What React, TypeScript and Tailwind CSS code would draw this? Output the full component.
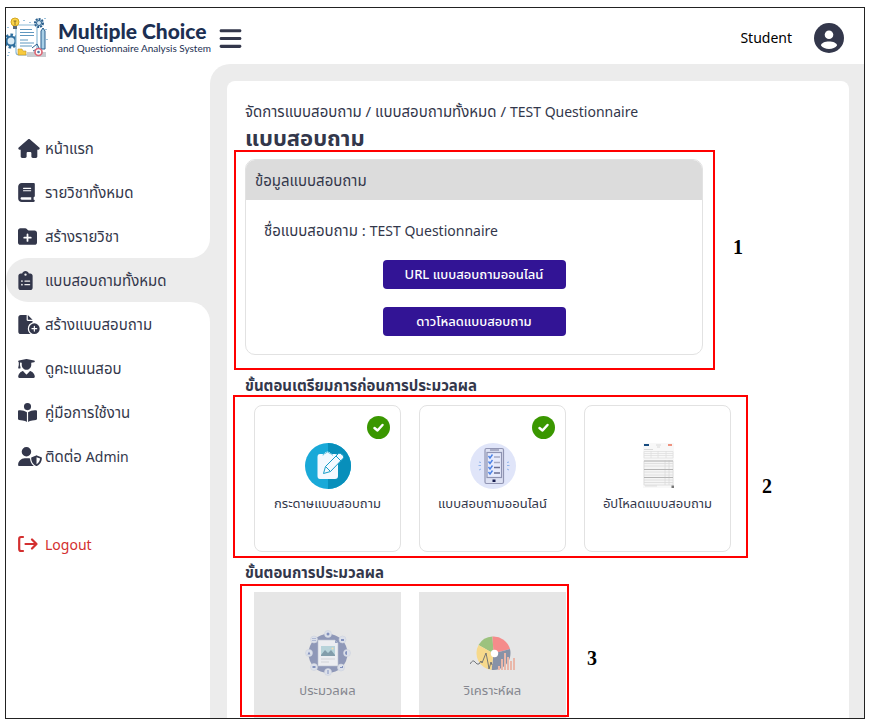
import type { ReactNode } from "react";
import {
  FaBars,
  FaBook,
  FaBookOpenReader,
  FaClipboardList,
  FaFileCirclePlus,
  FaFolderPlus,
  FaHouse,
  FaUserGraduate,
  FaUserShield,
} from "react-icons/fa6";

type NavEntry = { thai?: string; latin?: string; icon: ReactNode };

const navAbove: NavEntry[] = [
  { thai: "หน้าแรก", icon: <FaHouse className="h-[19px] w-[22px]" /> },
  { thai: "รายวิชาทั้งหมด", icon: <FaBook className="h-[19px] w-[17px]" /> },
  { thai: "สร้างรายวิชา", icon: <FaFolderPlus className="h-[19px] w-[19px]" /> },
];

const navBelow: NavEntry[] = [
  { thai: "สร้างแบบสอบถาม", icon: <FaFileCirclePlus className="h-[19px] w-[22px]" /> },
  { thai: "ดูคะแนนสอบ", icon: <FaUserGraduate className="h-[19px] w-[17px]" /> },
  { thai: "คู่มือการใช้งาน", icon: <FaBookOpenReader className="h-[19px] w-[19px]" /> },
  { thai: "ติดต่อ ", latin: "Admin", icon: <FaUserShield className="h-[19px] w-[24px]" /> },
];

function NavLink({ thai, latin, icon }: NavEntry) {
  return (
    <a href="#" className="flex h-11 items-center pl-3 text-[15px] whitespace-nowrap">
      <span className="w-[27px] shrink-0">{icon}</span>
      <span>
        {thai}
        {latin && <span className="text-sm">{latin}</span>}
      </span>
    </a>
  );
}

function LogoutIcon() {
  return (
    <svg
      viewBox="0 0 20 19"
      className="h-[19px] w-5"
      fill="none"
      stroke="currentColor"
      strokeWidth="2.2"
      strokeLinecap="round"
      strokeLinejoin="round"
      aria-hidden="true"
    >
      <path d="M5 2H3Q1.200 2 1.200 4V14Q1.200 16 3 16H5" />
      <path d="M7.500 9H18.500M14 4.500L18.500 9L14 13.500" />
    </svg>
  );
}

function LogoArt() {
  return (
    <svg viewBox="0 0 42 42" className="mt-1 h-[42px] w-[42px] shrink-0" aria-hidden="true">
      <g fill="#9cc3dd">
        <rect x="17" y="3" width="2" height="1" />
        <rect x="23" y="5" width="2" height="1" />
        <rect x="1" y="10" width="2" height="1" />
        <rect x="38" y="1" width="2" height="1" />
        <rect x="39" y="12" width="2" height="1" />
        <rect x="40" y="22" width="2" height="1" />
        <rect x="2" y="35" width="2" height="1" />
        <rect x="1" y="38" width="2" height="1" />
        <rect x="37" y="38" width="3" height="1" />
      </g>
      <circle cx="5" cy="24" r="6" fill="none" stroke="#2f6f9e" strokeWidth="3" strokeDasharray="2.5 2" />
      <circle cx="5" cy="24" r="4.500" fill="#d8eaf5" stroke="#2f6f9e" strokeWidth="2" />
      <path d="M10 8H31V38H13Q10 38 10 35Z" fill="#fff" stroke="#8bb9d6" strokeWidth="1.2" />
      <path d="M14 12.500H26M14 15.500H28M14 18.500H28M14 23H22M14 26H28M14 29H26" stroke="#5f97bf" strokeWidth="1.2" />
      <circle cx="9" cy="5" r="4" fill="#fbd54a" stroke="#d3a622" />
      <path d="M9 4V8M7.500 4H10.500" stroke="#775c1e" strokeWidth=".8" />
      <path d="M7 9H11V12H7Z" fill="#5b6b7c" />
      <circle cx="33" cy="6" r="4" fill="#d8eaf5" stroke="#2a5f8d" strokeWidth="2" strokeDasharray="2 1" />
      <circle cx="33" cy="6" r="2.500" fill="none" stroke="#2a5f8d" />
      <path d="M35 14L37 11L39 14V32H35Z" fill="#a9cfe6" stroke="#2a5f8d" />
      <path d="M26 31L31 27L33 31L27 34" fill="none" stroke="#2a5f8d" />
      <path d="M21 35H40V40H21Z" fill="#c9ccd0" />
      <path d="M12 32H16L17 34H20V38H12Z" fill="#f8ca3d" stroke="#bd9228" strokeWidth=".6" />
      <circle cx="32.500" cy="35" r="3.500" fill="#fff" stroke="#dc6877" strokeWidth="1.700" />
      <circle cx="32.500" cy="35" r="1.300" fill="#4d77a5" />
    </svg>
  );
}

function Avatar() {
  return (
    <svg viewBox="0 0 30 30" className="h-[30px] w-[30px]" aria-hidden="true">
      <circle cx="15" cy="15" r="15" fill="#33374b" />
      <circle cx="15" cy="11.700" r="4.300" fill="#fff" />
      <path d="M7 22.500C7 20 11 18.500 15 18.500S23 20 23 22.500C21.500 24.500 18.500 26 15 26S8.500 24.500 7 22.500Z" fill="#fff" />
    </svg>
  );
}

function PaperArt() {
  return (
    <svg viewBox="0 0 46 46" className="h-[46px] w-[46px]" aria-hidden="true">
      <circle cx="23" cy="23" r="23" fill="#19a9d8" />
      <path d="M23 0A23 23 0 0 1 23 46Z" fill="#088fbb" />
      <path d="M15 11H19Q20 8.500 22.500 8.500T26 11H30Q33 11 33 14V33Q33 36 30 36H15Q12.500 36 12.500 33V14Q12.500 11 15 11Z" fill="#f3f9ff" />
      <path d="M18 12.500Q18 10.500 20 10.500Q22.500 7.500 25 10.500Q27.500 10.500 27.500 12.500" fill="none" stroke="#69c3df" />
      <path d="M18.500 30.500L20.500 23.500L33.500 10.500Q35 9.500 37 11.500L38.500 13Q39 14.500 38 15.500L25.500 28.500Z" fill="#f3f9ff" stroke="#169cc8" strokeLinejoin="round" />
      <path d="M31 13L36 18M20.500 23.500L25.500 28.500" stroke="#169cc8" />
    </svg>
  );
}

function PhoneArt() {
  return (
    <svg viewBox="0 0 46 46" className="h-[46px] w-[46px]" aria-hidden="true">
      <circle cx="23" cy="23" r="23" fill="#e0e5f9" />
      <rect x="15" y="5.500" width="18.500" height="35" rx="1.500" fill="#dde1f3" stroke="#9195b3" strokeWidth="1.200" />
      <path d="M20 6H29V8H20Z" fill="#a9adc6" />
      <rect x="17" y="9.500" width="14.500" height="25" fill="#e7ebfc" stroke="#8e93b2" strokeWidth="1.200" />
      <g fill="none" stroke="#4c82e5" strokeWidth="1.400">
        <path d="M18.500 13L20 15L22.500 11.500" />
        <path d="M18.500 18.500L20 20.500L22.500 17" />
        <path d="M18.500 24L20 26L22.500 22.500" />
        <path d="M18.500 29L20 31L22.500 27.500" />
      </g>
      <path d="M24 14H30M24 19.500H30" stroke="#a7abc3" strokeWidth="1.500" />
      <path d="M24 24.500H30M24 30H30" stroke="#6b6f91" strokeWidth="1.500" />
      <rect x="22.500" y="36.500" width="3" height="2.500" fill="#171c4f" />
      <path d="M9 19L11 19.500M8.500 22.500H11M9 27L11 26M37 19.500L39 19M37 22.500H39.500M37 26L39 27" stroke="#91b4ea" />
    </svg>
  );
}

function SheetArt() {
  return (
    <svg viewBox="0 0 46 46" className="h-[46px] w-[46px]" aria-hidden="true">
      <rect x="8" y="0" width="31" height="45" fill="#f8f8f8" />
      <rect x="9" y="1" width="5" height="2" fill="#174c80" />
      <rect x="33" y="1" width="4" height="2" fill="#ef927f" />
      <path d="M21 2H26M22 4H25M9 6.500H18" stroke="#d0d0d0" strokeWidth=".8" />
      <path d="M9 8.500H38V15H9ZM9 10.500H38M9 12.500H38M16 8V15M23 8V15M31 8V15" fill="none" stroke="#e0e0e0" strokeWidth=".8" />
      <path d="M9 18H38V42H9ZM9 20.500H38M9 23H38M9 29H38M9 32H38M9 37H38M9 39.500H38M30 17V42M34 17V42" fill="#f5f5f5" stroke="#dadada" strokeWidth=".8" />
      <path d="M9 18H38M9 26.500H38M9 34.500H38" stroke="#b5b5b5" strokeWidth="1.200" />
      <path d="M10 43H22" stroke="#d5d5d5" strokeWidth=".7" />
      <rect x="36.500" y="42.500" width="2.500" height="2.500" fill="#777" />
    </svg>
  );
}

function ProcessArt() {
  return (
    <svg viewBox="0 0 46 46" className="h-[46px] w-[46px]" aria-hidden="true">
      <circle cx="23" cy="23.500" r="19.500" fill="#8f98b8" />
      <g fill="#dce0ea" stroke="#cdd1dd" strokeWidth=".6">
        <circle cx="23" cy="4" r="3.500" />
        <circle cx="37.500" cy="9.500" r="3.500" />
        <circle cx="42" cy="23" r="3.500" />
        <circle cx="36" cy="37.500" r="3.500" />
        <circle cx="23" cy="42" r="3.500" />
        <circle cx="9" cy="37" r="3.500" />
        <circle cx="4" cy="23" r="3.500" />
        <circle cx="9" cy="9.500" r="3.500" />
      </g>
      <g fill="#8291bd">
        <circle cx="23" cy="4" r="1.500" />
        <path d="M36 9H39V11H36ZM42 21A2 2 0 0 0 42 25ZM35 38H38V36H37V37H35ZM22.500 40H23.500V44H22.500ZM7.500 36H10.500V38H7.500ZM4 21.500L5.500 24.500H2.500Z" />
        <path d="M7 8.500H11V9H7ZM7 10.500H11V11H7Z" />
      </g>
      <path d="M13 10H30L33 13V36H13Z" fill="#ecedf1" stroke="#bdc2d2" strokeWidth=".6" />
      <path d="M30 10V13H33Z" fill="#9aa5c4" />
      <rect x="16" y="16" width="14" height="10" fill="#b7d3da" />
      <path d="M16 25L20 20L23 23L26 20L30 25V26H16Z" fill="#829dab" />
      <circle cx="27.500" cy="18.500" r="1" fill="#f6dfb0" />
      <path d="M16 29H30M16 32H24" stroke="#d1d3d8" />
    </svg>
  );
}

function AnalysisArt() {
  return (
    <svg viewBox="0 0 46 46" className="h-[46px] w-[46px]" aria-hidden="true">
      <path d="M23.500 23.500L8.500 15A17 17 0 0 1 22.500 6.500Z" fill="#9cc27e" />
      <path d="M23.500 23.500L22.500 6.500A17 17 0 0 1 40 19Z" fill="#f58b8b" />
      <path d="M23.500 23.500L40 19A17 17 0 0 1 21.500 40Z" fill="#8792a7" />
      <path d="M23.500 23.500L21.500 40A17 17 0 0 1 8.500 15Z" fill="#f7d98b" />
      <circle cx="24.500" cy="23.500" r="3.700" fill="#fff" />
      <g fill="#e9b7a9">
        <rect x="28" y="36" width="2" height="4" />
        <rect x="31" y="29" width="2" height="11" />
        <rect x="34" y="23" width="2" height="17" />
        <rect x="37" y="27" width="2" height="13" />
        <rect x="40" y="31" width="2" height="9" />
        <rect x="43" y="28" width="2" height="12" />
      </g>
      <path d="M0 34Q3 29 5 32T9 34L11 31L12 33L16 23L18 33L19 39L21 32L22 35" fill="none" stroke="#686b70" strokeWidth=".9" />
    </svg>
  );
}

function StepCard({ label, art, done = false }: { label: string; art: ReactNode; done?: boolean }) {
  return (
    <button
      type="button"
      className="relative flex h-[147px] w-[147px] flex-col items-center gap-0.5 rounded-lg border border-[#e2e2e2] bg-white pt-[37px] text-[13px] leading-6"
    >
      {art}
      {label}
      {done && (
        <span className="absolute top-[10px] right-[10px] size-[23px] rounded-full bg-[#3a9700]">
          <svg viewBox="0 0 23 23" fill="none" stroke="#fff" strokeWidth="2.5" strokeLinecap="round" strokeLinejoin="round" aria-hidden="true">
            <path d="M7.500 12L10.500 14.500L15.500 9" />
          </svg>
        </span>
      )}
    </button>
  );
}

function LockedCard({ label, art }: { label: string; art: ReactNode }) {
  return (
    <button
      type="button"
      disabled
      className="flex h-[147px] w-[147px] flex-col items-center gap-0.5 bg-[#e6e6e6] pt-[38px] text-[13px] leading-6 text-[#85868f]"
    >
      {art}
      {label}
    </button>
  );
}

/* Red outline laid over a section, with its number to the right. */
function Callout({ number, className, numberClass }: { number: string; className: string; numberClass: string }) {
  return (
    <div className={`pointer-events-none absolute border-2 border-[#f00] ${className}`}>
      <span
        className={`absolute left-full -translate-y-1/2 font-['Liberation_Serif',serif] text-xl leading-6 font-bold text-black ${numberClass}`}
      >
        {number}
      </span>
    </div>
  );
}

export default function App() {
  return (
    <div className="h-screen bg-white px-[5px] pt-[7px] pb-[3px] font-['Noto_Sans','Noto_Sans_Thai',sans-serif] text-[#33374b]">
      <div className="flex h-full flex-col overflow-hidden border border-[#222]">
        <header className="z-10 flex h-14 shrink-0 items-center bg-white pr-5">
          <LogoArt />
          <div className="ml-[10px] w-[150px] pt-0.5 font-['Lato',sans-serif] whitespace-nowrap text-[#1c2f52] [font-variant-ligatures:none]">
            <div className="text-[21px] leading-[22px] font-black">Multiple Choice</div>
            <div className="text-[10px] leading-3">and Questionnaire Analysis System</div>
          </div>
          <button type="button" aria-label="Menu" className="mt-1 ml-[10px] text-[25px]">
            <FaBars />
          </button>
          <div className="ml-auto flex items-center gap-[22px] pt-1 text-sm text-black">
            Student
            <Avatar />
          </div>
        </header>

        <div className="flex min-h-0 flex-1 bg-white">
          <nav className="flex w-[204px] shrink-0 flex-col bg-[#ececec]">
            <div className="rounded-br-[20px] bg-white pt-[62px]">
              {navAbove.map((item) => (
                <NavLink key={item.thai} {...item} />
              ))}
            </div>
            <div className="bg-white">
              <div className="rounded-l-[22px] bg-[#ececec]">
                <NavLink thai="แบบสอบถามทั้งหมด" icon={<FaClipboardList className="h-[19px] w-[15px]" />} />
              </div>
            </div>
            <div className="flex-1 rounded-tr-[20px] bg-white">
              {navBelow.map((item) => (
                <NavLink key={item.thai} {...item} />
              ))}
              <div className="pt-11 text-[#d32f2f]">
                <NavLink latin="Logout" icon={<LogoutIcon />} />
              </div>
            </div>
          </nav>

          <main className="flex min-w-0 flex-1 overflow-hidden rounded-tl-[20px] bg-[#ececec] pt-[17px] pr-[15px] pl-[17px]">
            <div className="min-w-0 flex-1 rounded-t-lg bg-white px-[18px] pt-[18px]">
              <div className="text-[15px] leading-6">
                จัดการแบบสอบถาม / แบบสอบถามทั้งหมด / <span className="text-sm">TEST Questionnaire</span>
              </div>
              <h1 className="text-[22px] leading-7 font-bold">แบบสอบถาม</h1>

              <section className="relative mt-2 max-w-[458px]">
                <div className="rounded-[10px] border border-[#e2e2e2]">
                  <h2 className="rounded-t-[9px] bg-[#dcdcdc] px-[9px] text-[15px] leading-10">ข้อมูลแบบสอบถาม</h2>
                  <div className="flex flex-col items-center gap-[18px] p-[18px]">
                    <p className="w-full text-[15px] leading-6">
                      ชื่อแบบสอบถาม : <span className="text-sm">TEST Questionnaire</span>
                    </p>
                    <button type="button" className="h-[29px] w-[183px] rounded bg-[#321495] text-[13px] font-medium text-white">
                      URL แบบสอบถามออนไลน์
                    </button>
                    <button type="button" className="h-[29px] w-[183px] rounded bg-[#321495] text-[13px] font-medium text-white">
                      ดาวโหลดแบบสอบถาม
                    </button>
                  </div>
                </div>
                <Callout number="1" className="-top-[9px] -right-[12px] -bottom-[15px] -left-[11px]" numberClass="top-[44%] pl-5" />
              </section>

              <h2 className="mt-[18px] text-[15px] leading-6 font-bold">ขั้นตอนเตรียมการก่อนการประมวลผล</h2>
              <section className="relative mt-2 ml-[9px] flex w-fit gap-[18px]">
                <StepCard label="กระดาษแบบสอบถาม" art={<PaperArt />} done />
                <StepCard label="แบบสอบถามออนไลน์" art={<PhoneArt />} done />
                <StepCard label="อัปโหลดแบบสอบถาม" art={<SheetArt />} />
                <Callout number="2" className="-top-[10px] -right-[17px] -bottom-[6px] -left-[21px]" numberClass="top-[56%] pl-4" />
              </section>

              <h2 className="mt-2 text-[15px] leading-6 font-bold">ขั้นตอนการประมวลผล</h2>
              <section className="relative mt-2 ml-[9px] flex w-fit gap-[18px]">
                <LockedCard label="ประมวลผล" art={<ProcessArt />} />
                <LockedCard label="วิเคราะห์ผล" art={<AnalysisArt />} />
                <Callout number="3" className="-top-2 -right-[3px] bottom-[22px] -left-[14px]" numberClass="top-[56%] pl-5" />
              </section>
            </div>
          </main>
        </div>
      </div>
    </div>
  );
}
